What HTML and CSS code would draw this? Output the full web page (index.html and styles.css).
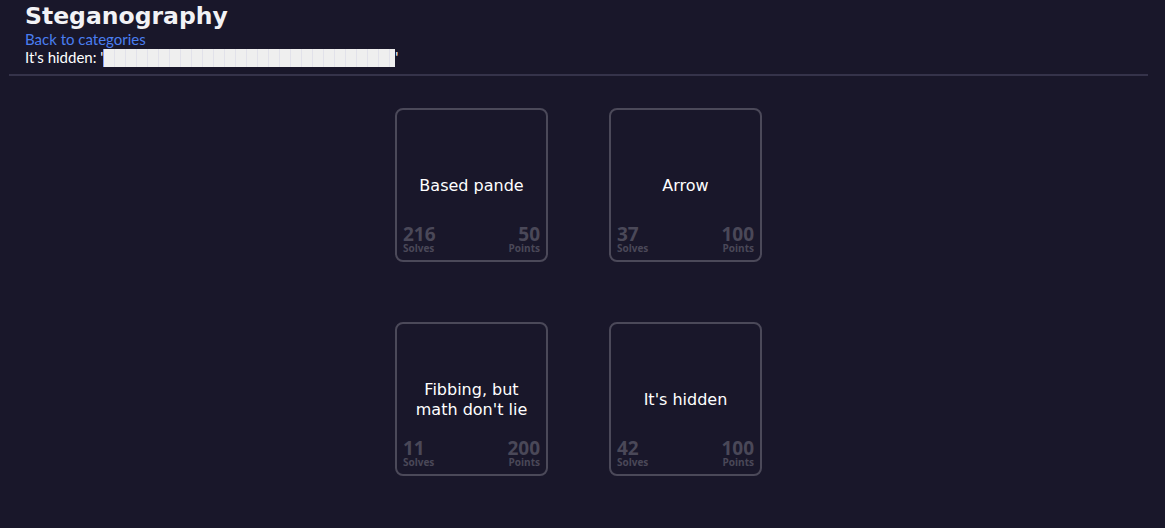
FILE: index.html
```html
<!DOCTYPE html>
<html>
<head>
<meta charset="utf-8">
<link rel="stylesheet" href="styles.css">
</head>
<body>
<header class="header">
  <h1 class="title">Steganography</h1>
  <a class="back" href="#">Back to categories</a>
  <p class="hidden-line">It's hidden: '<span class="tofu"></span>'</p>
</header>
<hr class="rule">
<main class="grid">
  <div class="card">
    <div class="card-name">Based pande</div>
    <div class="stats">
      <div class="stat"><span class="num">216</span><span class="lbl">Solves</span></div>
      <div class="stat right"><span class="num">50</span><span class="lbl">Points</span></div>
    </div>
  </div>
  <div class="card">
    <div class="card-name">Arrow</div>
    <div class="stats">
      <div class="stat"><span class="num">37</span><span class="lbl">Solves</span></div>
      <div class="stat right"><span class="num">100</span><span class="lbl">Points</span></div>
    </div>
  </div>
  <div class="card">
    <div class="card-name">Fibbing, but<br>math don't lie</div>
    <div class="stats">
      <div class="stat"><span class="num">11</span><span class="lbl">Solves</span></div>
      <div class="stat right"><span class="num">200</span><span class="lbl">Points</span></div>
    </div>
  </div>
  <div class="card">
    <div class="card-name">It's hidden</div>
    <div class="stats">
      <div class="stat"><span class="num">42</span><span class="lbl">Solves</span></div>
      <div class="stat right"><span class="num">100</span><span class="lbl">Points</span></div>
    </div>
  </div>
</main>
</body>
</html>
```
FILE: styles.css
```css
html, body {
  background: #19172a;
}
body {
  margin: 0 17px 0 9px;
  color: #ffffff;
  font-family: Lato, "Liberation Sans", sans-serif;
}
.header {
  padding: 0 0 0 16px;
}
.title {
  margin: 0;
  padding-top: 1px;
  font-family: "DejaVu Sans", sans-serif;
  font-weight: bold;
  font-size: 23.5px;
  line-height: 30px;
  color: #f2f2f5;
}
.back {
  display: block;
  color: #4a7ef0;
  text-decoration: none;
  font-size: 15px;
  line-height: 17px;
}
.hidden-line {
  margin: 0;
  font-size: 15px;
  line-height: 19px;
  color: #ffffff;
}
.tofu {
  display: inline-block;
  vertical-align: top;
  width: 291px;
  height: 18px;
  margin-top: 1px;
  background-color: #efefef;
  background-image: repeating-linear-gradient(90deg, transparent 0, transparent 10px, #e2e2ea 10px, #e2e2ea 11px);
  border-left: 1px solid #7aa0ff;
}
.rule {
  margin: 7px 0 0 0;
  border: 0;
  height: 2px;
  background: #35334a;
}
.grid {
  display: grid;
  grid-template-columns: 153px 153px;
  column-gap: 61px;
  row-gap: 60px;
  justify-content: center;
  padding-top: 32px;
}
.card {
  box-sizing: border-box;
  width: 153px;
  height: 154px;
  border: 2px solid #4b4959;
  border-radius: 8px;
  display: grid;
  padding: 0 6px;
}
.card-name {
  grid-area: 1 / 1;
  align-self: center;
  text-align: center;
  padding-top: 1px;
  font-family: "DejaVu Sans", sans-serif;
  font-size: 16px;
  line-height: 20px;
  color: #ffffff;
}
.stats {
  grid-area: 1 / 1;
  align-self: end;
  display: flex;
  justify-content: space-between;
  align-items: flex-end;
  padding-bottom: 6px;
  color: #4a4858;
  font-family: "Open Sans", sans-serif;
  font-weight: bold;
}
.stat {
  display: flex;
  flex-direction: column;
}
.stat.right {
  align-items: flex-end;
}
.num {
  font-size: 19px;
  line-height: 17px;
}
.lbl {
  font-size: 10px;
  line-height: 11px;
}
```
